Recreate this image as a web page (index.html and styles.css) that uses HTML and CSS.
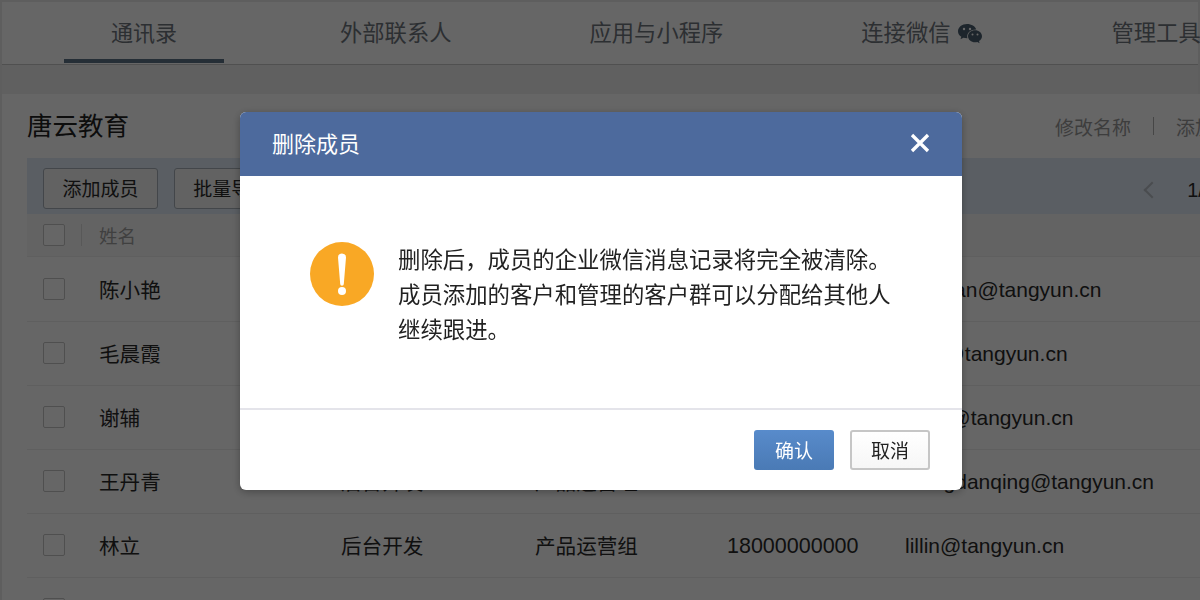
FILE: index.html
```html
<!DOCTYPE html>
<html lang="zh-CN">
<head>
    <meta charset="UTF-8">
    <meta name="viewport" content="width=device-width, initial-scale=1.0">
    <title>删除成员</title>
    <link rel="stylesheet" href="styles.css">
</head>
<body>

    <!-- Top Nav -->
    <nav class="nav">
        <a class="tab tab-active">通讯录</a>
        <a class="tab">外部联系人</a>
        <a class="tab">应用与小程序</a>
        <a class="tab tab-wechat">连接微信
            <svg class="wechat-icon" viewBox="0 0 24 20">
                <path class="wechat-back" d="M9 0C4 0 0 3.2 0 7.2c0 2.3 1.3 4.300 3.300 5.600L2.500 15.300l2.900-1.500c1.100.3 2.300.5 3.500.5h.6a6 6 0 0 1-.3-1.900C9.200 8.500 12.900 5.500 17.800 5.500h.4C17.300 2.300 13.500 0 9 0z"/>
                <path class="wechat-back" d="M24 12.200c0-3.400-3.200-6-7-6s-7 2.600-7 6 3.200 6 7 6c.8 0 1.600-.1 2.300-.3l2.300 1.300-.6-2.100c1.800-1.100 3-2.900 3-4.900z"/>
                <circle class="wechat-eye" cx="6" cy="5" r="1.200"/>
                <circle class="wechat-eye" cx="12" cy="5" r="1.200"/>
                <circle class="wechat-eye" cx="14.500" cy="10.500" r="1"/>
                <circle class="wechat-eye" cx="19.500" cy="10.500" r="1"/>
            </svg>
        </a>
        <a class="tab">管理工具</a>
    </nav>

    <div class="band"></div>

    <!-- Member List -->
    <main class="content">
        <div class="title-row">
            <h1>唐云教育</h1>
            <div class="title-links">
                <a>修改名称</a>
                <span class="title-sep"></span>
                <a>添加子部门</a>
            </div>
        </div>

        <div class="toolbar">
            <button class="tool-btn">添加成员</button>
            <button class="tool-btn">批量导入/导出</button>
            <span class="pager-prev"></span>
            <span class="pager-num">1/1</span>
        </div>

        <div class="row row-head">
            <span class="check"></span>
            <span class="head-sep"></span>
            <span class="head-name">姓名</span>
        </div>

        <div class="row">
            <span class="check"></span>
            <span class="name">陈小艳</span>
            <span class="job">后台开发</span>
            <span class="dept">产品运营组</span>
            <span class="phone">18000000000</span>
            <span class="mail">xiaoyan@tangyun.cn</span>
        </div>
        <div class="row">
            <span class="check"></span>
            <span class="name">毛晨霞</span>
            <span class="job">后台开发</span>
            <span class="dept">产品运营组</span>
            <span class="phone">18000000000</span>
            <span class="mail">mcx@tangyun.cn</span>
        </div>
        <div class="row">
            <span class="check"></span>
            <span class="name">谢辅</span>
            <span class="job">后台开发</span>
            <span class="dept">产品运营组</span>
            <span class="phone">18000000000</span>
            <span class="mail">xiefu@tangyun.cn</span>
        </div>
        <div class="row">
            <span class="check"></span>
            <span class="name">王丹青</span>
            <span class="job">后台开发</span>
            <span class="dept">产品运营组</span>
            <span class="phone">18000000000</span>
            <span class="mail">wangdanqing@tangyun.cn</span>
        </div>
        <div class="row">
            <span class="check"></span>
            <span class="name">林立</span>
            <span class="job">后台开发</span>
            <span class="dept">产品运营组</span>
            <span class="phone">18000000000</span>
            <span class="mail">lillin@tangyun.cn</span>
        </div>
        <div class="row">
            <span class="check"></span>
        </div>
    </main>

    <!-- Delete Dialog -->
    <div class="overlay">
        <div class="dialog">
            <div class="dialog-head">
                <span class="dialog-title">删除成员</span>
                <svg class="close-icon" viewBox="0 0 20 20">
                    <path d="M2 2l16 16M18 2L2 18"/>
                </svg>
            </div>
            <div class="dialog-body">
                <svg class="warn-icon" viewBox="0 0 64 64">
                    <circle cx="32" cy="32" r="32" fill="#f9a825"/>
                    <path d="M28 15.500a4 4 0 0 1 8 0L33.800 42a1.800 1.800 0 0 1-3.600 0z" fill="#fff"/>
                    <circle cx="32" cy="49" r="4" fill="#fff"/>
                </svg>
                <p>删除后，成员的企业微信消息记录将完全被清除。<br>成员添加的客户和管理的客户群可以分配给其他人<br>继续跟进。</p>
            </div>
            <div class="dialog-foot">
                <button class="btn btn-primary">确认</button>
                <button class="btn">取消</button>
            </div>
        </div>
    </div>

</body>
</html>
```

FILE: styles.css
```css
* {
    box-sizing: border-box;
}
body {
    margin: 0;
    padding: 2px 2px 0;
    height: 600px;
    overflow: hidden;
    background-color: #ececec;
    font-family: "Liberation Sans", "Noto Sans CJK SC", sans-serif;
    color: #2a2a2a;
}
.nav {
    display: flex;
    height: 63px;
    padding-left: 62px;
    background: #fff;
    border-bottom: 1px solid #c8c8c8;
    white-space: nowrap;
}
.tab {
    display: flex;
    align-items: center;
    flex-shrink: 0;
    height: 62px;
    margin-right: 138px;
    padding-bottom: 4px;
    font-size: 22.300px;
    color: #6f757d;
}
.tab-active {
    justify-content: center;
    width: 160px;
    height: 61px;
    margin-right: 116px;
    padding-bottom: 0;
    border-bottom: 4px solid #5e7488;
    font-size: 22px;
}
.tab-wechat {
    margin-right: 130px;
}
.wechat-icon {
    width: 24px;
    height: 20px;
    margin: 6px 0 0 7px;
}
.wechat-back {
    fill: #4a5e6e;
}
.wechat-eye {
    fill: #fff;
}
.band {
    height: 29px;
    background: #f0f0f0;
}
.content {
    width: 1294px;
    padding: 0 25px;
    background: #fff;
    height: 520px;
}
.title-row {
    display: flex;
    align-items: center;
    height: 64px;
}
h1 {
    margin: -6px 0 0;
    font-size: 25.500px;
    font-weight: 400;
    color: #222;
}
.title-links {
    display: flex;
    align-items: center;
    margin-left: auto;
    font-size: 19px;
    color: #999;
    white-space: nowrap;
}
.title-sep {
    width: 1px;
    height: 18px;
    margin: 0 22px;
    background: #b0b0b0;
}
.toolbar {
    display: flex;
    align-items: center;
    height: 56px;
    padding: 4px 0 0 16px;
    background: #e1ebf7;
    white-space: nowrap;
}
.tool-btn {
    height: 41px;
    width: 115px;
    margin-right: 16px;
    padding: 0 0 2px;
    border: 1px solid #a8b0b8;
    border-radius: 3px;
    background: #f4f4f4;
    font: inherit;
    font-size: 19px;
    color: #2a2a2a;
}
.tool-btn + .tool-btn {
    width: 158px;
}
.pager-prev {
    width: 12px;
    height: 12px;
    margin: 4px 29px 0 auto;
    border-left: 2px solid #b8bfc6;
    border-bottom: 2px solid #b8bfc6;
    transform: rotate(45deg);
}
.pager-num {
    margin: 4px 56px 0 0;
    font-size: 20px;
}
.row {
    display: flex;
    align-items: center;
    height: 64px;
    padding: 0 0 2px 16px;
    border-bottom: 1px solid #ededed;
    font-size: 20.600px;
    white-space: nowrap;
}
.row-head {
    height: 43px;
    margin-bottom: 1px;
    padding-bottom: 0;
    background: #f8f8f8;
}
.check {
    flex-shrink: 0;
    width: 22px;
    height: 22px;
    border: 1px solid #c6c6c6;
    border-radius: 2px;
    background: #fff;
}
.head-sep {
    width: 1px;
    height: 22px;
    margin: 0 17px 0 16px;
    background: #ddd;
}
.head-name {
    font-size: 18.500px;
    color: #a0a0a0;
}
.name {
    width: 242px;
    margin-left: 34px;
}
.job {
    width: 194px;
}
.dept {
    width: 192px;
}
.phone {
    width: 178px;
    padding-top: 4px;
    font-size: 21.500px;
}
.mail {
    padding-top: 2px;
    font-size: 21px;
}
.overlay {
    position: fixed;
    top: 0;
    left: 0;
    width: 100%;
    height: 100%;
    display: flex;
    justify-content: center;
    padding: 112px 0 0 2px;
    background: rgba(0, 0, 0, 0.6);
}
.dialog {
    width: 722px;
    height: 378px;
    border-radius: 6px;
    overflow: hidden;
    background: #fff;
    box-shadow: 0 2px 8px rgba(0, 0, 0, 0.3);
    display: flex;
    flex-direction: column;
}
.dialog-head {
    display: flex;
    align-items: center;
    justify-content: space-between;
    height: 64px;
    padding: 0 32px;
    background: #4d6a9d;
    color: #fff;
    font-size: 22px;
}
.dialog-title {
    margin-top: -4px;
}
.close-icon {
    width: 20px;
    height: 20px;
    margin-top: -2px;
    fill: none;
    stroke: #fff;
    stroke-width: 3.300;
}
.dialog-body {
    display: flex;
    align-items: flex-start;
    flex: 1;
    padding: 66px 0 0 70px;
    border-bottom: 2px solid #e4e4ea;
}
.warn-icon {
    flex-shrink: 0;
    width: 64px;
    height: 64px;
    margin-right: 24px;
}
.dialog-body p {
    margin: 1px 0 0;
    font-size: 22.400px;
    line-height: 35px;
    color: #222;
    white-space: nowrap;
}
.dialog-foot {
    display: flex;
    justify-content: flex-end;
    gap: 16px;
    height: 80px;
    padding: 20px 32px 0 0;
}
.btn {
    width: 80px;
    height: 40px;
    padding: 0 0 2px;
    border: 2px solid #c6c6c6;
    border-radius: 3px;
    background: linear-gradient(#fff, #f6f6f6);
    font: inherit;
    font-size: 19px;
    color: #222;
}
.btn-primary {
    border: none;
    background: linear-gradient(#588bcb, #4a7ab5);
    color: #fff;
}
```
